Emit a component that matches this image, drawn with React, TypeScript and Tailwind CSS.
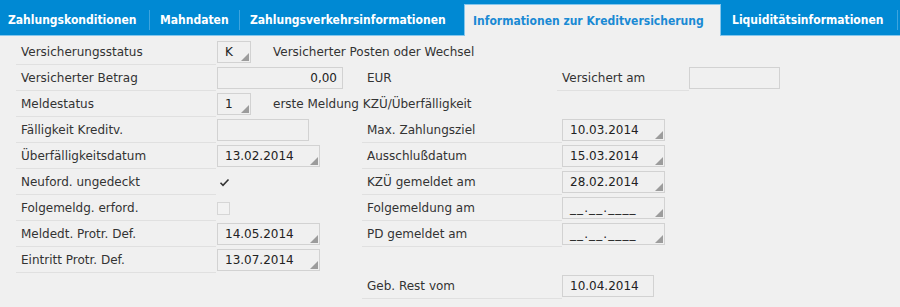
import React from "react";

const F = "[font-family:'DejaVu_Sans',sans-serif]";

function Triangle() {
  return (
    <svg className="absolute right-[1px] bottom-[1px]" width="8" height="8" viewBox="0 0 8 8">
      <polygon points="8,0 8,8 0,8" fill="#9c9c9c" />
    </svg>
  );
}

function Input({
  w,
  value = "",
  tri = false,
  right = false,
}: {
  w: string;
  value?: string;
  tri?: boolean;
  right?: boolean;
}) {
  return (
    <div
      className={`relative flex h-[22px] items-center border border-[#d2d2d2] bg-[#f0f0f0] text-[12px] text-[#222] ${w} ${
        right ? "justify-end pr-[5px]" : "pl-[7px]"
      }`}
    >
      <span className={value.startsWith("_") ? "tracking-[1.1px]" : ""}>{value}</span>
      {tri && <Triangle />}
    </div>
  );
}

function Label({ text, w = "w-[200px]", line = true }: { text: string; w?: string; line?: boolean }) {
  return (
    <div
      className={`flex h-[26px] shrink-0 items-center pl-[5px] text-[12px] text-[#333] ${w} ${
        line ? "border-b border-[#e0e0e0]" : ""
      }`}
    >
      {text}
    </div>
  );
}

function Checkbox({ checked }: { checked: boolean }) {
  if (checked) {
    return (
      <div className="ml-[1px] flex h-[13px] w-[13px] items-center justify-center">
        <svg width="11" height="9" viewBox="0 0 11 9">
          <path d="M1.5 4.8 L4 7.3 L9.5 1.5" fill="none" stroke="#333" strokeWidth="1.6" />
        </svg>
      </div>
    );
  }
  return <div className="h-[13px] w-[13px] border border-[#d6d6d6] bg-[#f2f2f2]" />;
}

function Row({ children }: { children: React.ReactNode }) {
  return <div className="flex h-[26px] items-stretch pl-[16px]">{children}</div>;
}

function LeftCtl({ children }: { children?: React.ReactNode }) {
  return <div className="flex w-[146px] shrink-0 items-center pl-[1px]">{children}</div>;
}

function RightCtl({ children }: { children?: React.ReactNode }) {
  return <div className="flex items-center">{children}</div>;
}

function Tab({ text, w, sep = true }: { text: string; w: string; sep?: boolean }) {
  return (
    <div className={`flex h-[35px] shrink-0 items-center ${w}`}>
      <div className="flex h-full flex-1 items-center pt-[4px] pl-[8px] text-[12px] font-bold text-white [font-family:'DejaVu_Sans_Condensed',sans-serif]">
        {text}
      </div>
      {sep && <div className="mt-[4px] h-[20px] w-[1px] bg-[#3da4de]" />}
    </div>
  );
}

export default function App() {
  return (
    <div className={`h-[307px] w-[900px] overflow-hidden bg-[#f0f0f0] ${F}`}>
      <div className="flex h-[36px] border-b border-[#85c6ec] bg-[#0089d3]">
        <Tab text="Zahlungskonditionen" w="w-[150px]" />
        <div className="w-[90px] shrink-0">
          <div className="flex h-[35px] items-center">
            <div className="flex h-full flex-1 items-center pt-[4px] pl-[10px] text-[12px] font-bold text-white [font-family:'DejaVu_Sans_Condensed',sans-serif]">
              Mahndaten
            </div>
            <div className="mt-[4px] h-[20px] w-[1px] bg-[#3da4de]" />
          </div>
        </div>
        <div className="flex h-[35px] w-[224px] shrink-0 items-center pt-[4px] pl-[10px] text-[12px] font-bold text-white [font-family:'DejaVu_Sans_Condensed',sans-serif]">
          Zahlungsverkehrsinformationen
        </div>
        <div className="relative z-10 mt-[4px] -mb-[1px] flex h-[32px] w-[257px] shrink-0 items-center border-x border-t border-[#85c6ec] bg-[#f0f0f0] pl-[8px] text-[12px] font-bold text-[#1a8ad4] [font-family:'DejaVu_Sans_Condensed',sans-serif]">
          Informationen zur Kreditversicherung
        </div>
        <div className="flex h-[35px] w-[177px] shrink-0 items-center">
          <div className="flex h-full flex-1 items-center pt-[4px] pl-[11px] text-[12px] font-bold text-white [font-family:'DejaVu_Sans_Condensed',sans-serif]">
            Liquiditätsinformationen
          </div>
          <div className="mt-[4px] h-[20px] w-[1px] bg-[#3da4de]" />
        </div>
      </div>

      <div className="pt-[3px]">
        <Row>
          <Label text="Versicherungsstatus" />
          <div className="flex items-center pl-[1px]">
            <Input w="w-[34px]" value="K" tri />
            <span className="ml-[22px] text-[12px] text-[#333]">Versicherter Posten oder Wechsel</span>
          </div>
        </Row>
        <Row>
          <Label text="Versicherter Betrag" />
          <LeftCtl>
            <Input w="w-[126px]" value="0,00" right />
          </LeftCtl>
          <Label text="EUR" w="w-[195px]" line={false} />
          <Label text="Versichert am" w="w-[132px]" />
          <RightCtl>
            <Input w="w-[91px]" />
          </RightCtl>
        </Row>
        <Row>
          <Label text="Meldestatus" />
          <div className="flex items-center pl-[1px]">
            <Input w="w-[34px]" value="1" tri />
            <span className="ml-[22px] text-[12px] text-[#333]">erste Meldung KZÜ/Überfälligkeit</span>
          </div>
        </Row>
        <Row>
          <Label text="Fälligkeit Kreditv." />
          <LeftCtl>
            <Input w="w-[92px]" />
          </LeftCtl>
          <Label text="Max. Zahlungsziel" />
          <RightCtl>
            <Input w="w-[103px]" value="10.03.2014" tri />
          </RightCtl>
        </Row>
        <Row>
          <Label text="Überfälligkeitsdatum" />
          <LeftCtl>
            <Input w="w-[103px]" value="13.02.2014" tri />
          </LeftCtl>
          <Label text="Ausschlußdatum" />
          <RightCtl>
            <Input w="w-[103px]" value="15.03.2014" tri />
          </RightCtl>
        </Row>
        <Row>
          <Label text="Neuford. ungedeckt" />
          <LeftCtl>
            <Checkbox checked />
          </LeftCtl>
          <Label text="KZÜ gemeldet am" />
          <RightCtl>
            <Input w="w-[103px]" value="28.02.2014" tri />
          </RightCtl>
        </Row>
        <Row>
          <Label text="Folgemeldg. erford." />
          <LeftCtl>
            <Checkbox checked={false} />
          </LeftCtl>
          <Label text="Folgemeldung am" />
          <RightCtl>
            <Input w="w-[103px]" value="__.__.____" tri />
          </RightCtl>
        </Row>
        <Row>
          <Label text="Meldedt. Protr. Def." />
          <LeftCtl>
            <Input w="w-[103px]" value="14.05.2014" tri />
          </LeftCtl>
          <Label text="PD gemeldet am" />
          <RightCtl>
            <Input w="w-[103px]" value="__.__.____" tri />
          </RightCtl>
        </Row>
        <Row>
          <Label text="Eintritt Protr. Def." />
          <LeftCtl>
            <Input w="w-[103px]" value="13.07.2014" tri />
          </LeftCtl>
        </Row>
        <Row>
          <div className="w-[346px] shrink-0" />
          <Label text="Geb. Rest vom" />
          <RightCtl>
            <Input w="w-[92px]" value="10.04.2014" />
          </RightCtl>
        </Row>
      </div>
    </div>
  );
}
